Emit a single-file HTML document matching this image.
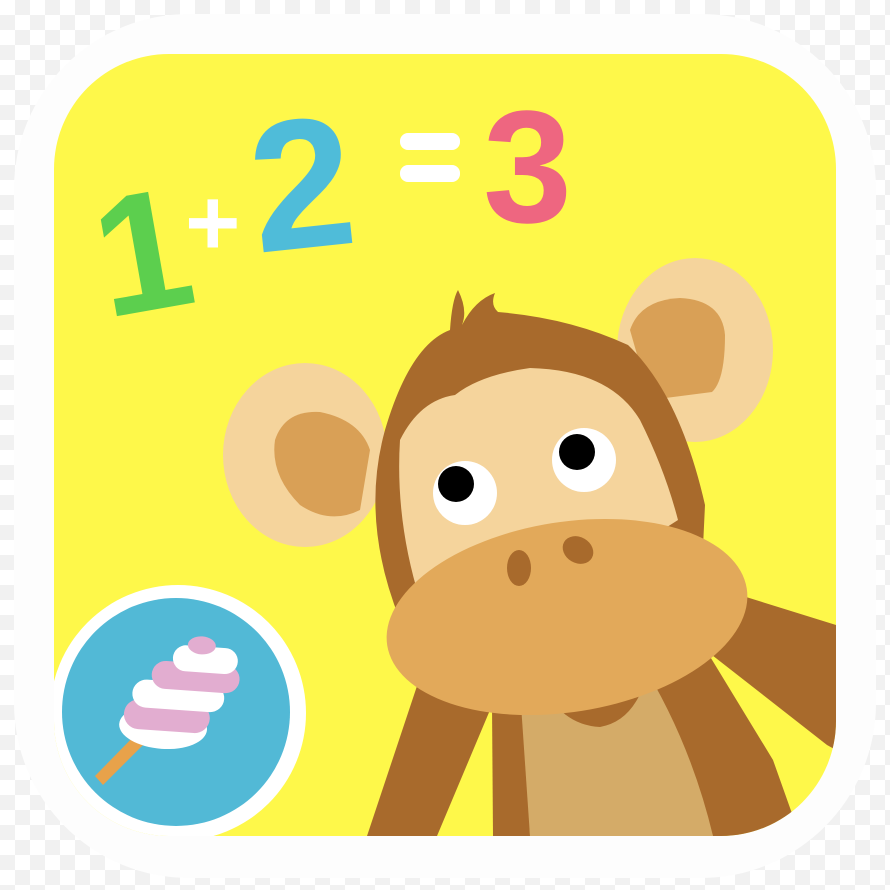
<!DOCTYPE html>
<html><head><style>
html,body{margin:0;padding:0;width:890px;height:890px;overflow:hidden;
background-color:#fff;
background-image:linear-gradient(45deg,#f1f1f1 25%,transparent 25%,transparent 75%,#f1f1f1 75%),linear-gradient(45deg,#f1f1f1 25%,transparent 25%,transparent 75%,#f1f1f1 75%);
background-size:30px 30px;background-position:0 0,15px 15px;}
svg{position:absolute;left:0;top:0}
</style></head><body>
<svg width="890" height="890" viewBox="0 0 890 890">
<defs>
<clipPath id="c"><rect x="54" y="54" width="782" height="782" rx="115"/></clipPath>
</defs>
<rect x="14" y="14" width="862" height="864" rx="175" fill="#fdfdfd"/>
<rect x="54" y="54" width="782" height="782" rx="115" fill="#fef84a"/>
<g clip-path="url(#c)">
<!-- numbers -->
<text x="95" y="312" font-family="Liberation Sans,sans-serif" font-weight="bold" font-size="170" fill="#5ccf4e" transform="rotate(-10 135 250)">1</text>
<text x="185" y="255" font-family="Liberation Sans,sans-serif" font-weight="bold" font-size="95" fill="#fff">+</text>
<text x="250" y="247" font-family="Liberation Sans,sans-serif" font-weight="bold" font-size="185" fill="#4fbcd9" transform="rotate(-6 310 180)">2</text>
<rect x="400" y="133" width="60" height="17" rx="8" fill="#fff"/>
<rect x="400" y="165" width="60" height="17" rx="8" fill="#fff"/>
<text x="483" y="222" font-family="Liberation Sans,sans-serif" font-weight="bold" font-size="160" fill="#ee6680">3</text>
<!-- ears -->
<ellipse cx="305" cy="455" rx="82" ry="92" fill="#f5d49c"/>
<path d="M275 440 Q285 410 320 412 Q360 420 370 450 L360 510 Q330 525 300 505 Q270 475 275 440 Z" fill="#d9a056"/>
<ellipse cx="695" cy="350" rx="78" ry="92" fill="#f5d49c"/>
<path d="M630 330 Q640 300 680 298 Q722 300 725 335 Q725 380 712 392 L650 400 Z" fill="#d9a056"/>
<!-- arms / body -->
<path d="M420 677 L490 710 L437 836 L367 836 Z" fill="#a86a2c"/>
<path d="M492 705 L525 688 L530 836 L493 836 Z" fill="#a86a2c"/>
<path d="M520 690 L653 657 Q700 740 713 836 L530 836 Z" fill="#d4ab68"/>
<path d="M640 660 L703 645 L773 760 L800 836 L713 836 Q690 740 640 660 Z" fill="#a86a2c"/>
<path d="M690 600 L730 592 L836 625 L836 750 L827 745 L703 648 Z" fill="#a86a2c"/>
<!-- head -->
<path d="M385 430 Q410 345 450 330 Q452 300 458 290 Q468 310 462 325 Q475 300 495 293 Q490 305 498 312 Q570 318 628 345 Q680 395 705 505 L700 610 L400 620 Q360 520 385 430 Z" fill="#a86a2c"/>
<path d="M400 440 Q420 400 455 395 Q480 375 530 368 Q610 370 640 420 Q665 470 678 520 L600 570 L420 600 Q395 520 400 440 Z" fill="#f5d49c"/>
<!-- eyes -->
<circle cx="465" cy="493" r="32" fill="#fff"/>
<circle cx="456" cy="484" r="18" fill="#000"/>
<circle cx="584" cy="460" r="32" fill="#fff"/>
<circle cx="577" cy="452" r="18" fill="#000"/>
<!-- mouth -->
<path d="M540 680 Q620 695 650 660 Q640 720 600 727 Q560 725 540 680 Z" fill="#a86a2c"/>
<!-- muzzle -->
<ellipse cx="567" cy="617" rx="182" ry="95" transform="rotate(-9 567 617)" fill="#e2a95a"/>
<ellipse cx="519" cy="568" rx="12" ry="18" fill="#a86a2c"/>
<ellipse cx="578" cy="550" rx="16" ry="13" transform="rotate(30 578 550)" fill="#a86a2c"/>
<!-- candy badge -->
<circle cx="178" cy="713" r="128" fill="#fff"/>
<circle cx="176" cy="712" r="114" fill="#52b9d6"/>
<path d="M95 776 L140 730 L148 740 L103 785 Z" fill="#e8a24a"/>
<g transform="rotate(4 180 700)">
<ellipse cx="165" cy="728" rx="44" ry="22" fill="#fff"/>
<rect x="125" y="702" width="86" height="30" rx="15" fill="#e2add0"/>
<rect x="132" y="682" width="92" height="28" rx="14" fill="#fff"/>
<rect x="150" y="662" width="88" height="28" rx="14" fill="#e2add0"/>
<rect x="170" y="645" width="65" height="26" rx="13" fill="#fff"/>
<ellipse cx="198" cy="644" rx="14" ry="9" fill="#e2add0"/>
</g>
</g>
</svg>
</body></html>
